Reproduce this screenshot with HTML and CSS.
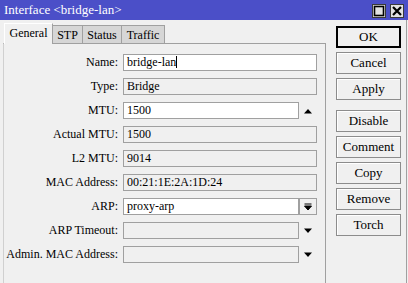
FILE: index.html
```html
<!DOCTYPE html>
<html lang="en">
<head>
  <meta charset="UTF-8">
  <title>Interface &lt;bridge-lan&gt;</title>
  <link rel="stylesheet" href="styles.css">
</head>
<body>
  <div class="window">
    <div class="titlebar">
      <span class="title">Interface &lt;bridge-lan&gt;</span>
      <div class="controls">
        <span class="ctl">
          <svg width="12" height="12" viewBox="0 0 12 12"><rect x="1.5" y="1.5" width="9" height="9" fill="none" stroke="#000" stroke-width="1.6"/></svg>
        </span>
        <span class="ctl">
          <svg width="12" height="12" viewBox="0 0 12 12"><path d="M2 2 L10 10 M10 2 L2 10" stroke="#000" stroke-width="2.2"/></svg>
        </span>
      </div>
    </div>

    <div class="main">
      <div class="left">
        <div class="tabs">
          <div class="tab active">General</div>
          <div class="tab stp">STP</div>
          <div class="tab status">Status</div>
          <div class="tab traffic">Traffic</div>
        </div>
        <div class="panel">
          <div class="row">
            <label>Name:</label>
            <div class="field edit">bridge-lan<span class="caret"></span></div>
          </div>
          <div class="row">
            <label>Type:</label>
            <div class="field">Bridge</div>
          </div>
          <div class="row">
            <label>MTU:</label>
            <div class="field edit short">1500</div>
            <span class="arrow">
              <svg width="10" height="6" viewBox="0 0 10 6"><path d="M1 5.5 L5 1 L9 5.5 Z" fill="#000"/></svg>
            </span>
          </div>
          <div class="row">
            <label>Actual MTU:</label>
            <div class="field">1500</div>
          </div>
          <div class="row">
            <label>L2 MTU:</label>
            <div class="field">9014</div>
          </div>
          <div class="row">
            <label>MAC Address:</label>
            <div class="field">00:21:1E:2A:1D:24</div>
          </div>
          <div class="row">
            <label>ARP:</label>
            <div class="field edit short">proxy-arp</div>
            <span class="dropbtn">
              <svg width="8" height="8" viewBox="0 0 8 8"><path d="M0.5 1 H7.5 M0.5 3 H7.5 L4 7 Z" stroke="#000" stroke-width="1" fill="#000"/></svg>
            </span>
          </div>
          <div class="row spaced">
            <label>ARP Timeout:</label>
            <div class="field short"></div>
            <span class="arrow">
              <svg width="10" height="6" viewBox="0 0 10 6"><path d="M1 0.5 L9 0.5 L5 5 Z" fill="#000"/></svg>
            </span>
          </div>
          <div class="row spaced">
            <label>Admin. MAC Address:</label>
            <div class="field short"></div>
            <span class="arrow">
              <svg width="10" height="6" viewBox="0 0 10 6"><path d="M1 0.5 L9 0.5 L5 5 Z" fill="#000"/></svg>
            </span>
          </div>
        </div>
      </div>

      <div class="buttons">
        <div class="btn default">OK</div>
        <div class="btn">Cancel</div>
        <div class="btn">Apply</div>
        <div class="btn gap">Disable</div>
        <div class="btn">Comment</div>
        <div class="btn">Copy</div>
        <div class="btn">Remove</div>
        <div class="btn">Torch</div>
      </div>
    </div>
  </div>
</body>
</html>
```

FILE: styles.css
```css
body {
  margin: 0;
  background: #f0f0f0;
  font-family: "Liberation Serif", "DejaVu Serif", serif;
  font-size: 12px;
  color: #000;
}
.window {
  width: 408px;
  height: 283px;
  display: flex;
  flex-direction: column;
  overflow: hidden;
}
.titlebar {
  height: 20px;
  background: #4b4fc8;
  color: #fff;
  display: flex;
  align-items: center;
  justify-content: space-between;
  padding: 0 4px 0 4px;
  font-size: 13px;
}
.controls {
  display: flex;
  gap: 4px;
  margin-top: 1px;
}
.ctl {
  width: 14px;
  height: 14px;
  box-sizing: border-box;
  background: #e2e2e2;
  border: 1px solid #3a3a3a;
  display: flex;
  align-items: center;
  justify-content: center;
}
.main {
  flex: 1;
  display: flex;
  border-right: 1px solid #a0a0a0;
  margin-right: 1px;
}
.left {
  width: 323px;
  margin-left: 3px;
  padding-top: 3px;
  display: flex;
  flex-direction: column;
}
.tabs {
  display: flex;
  align-items: flex-end;
  height: 20px;
  padding-left: 1px;
  position: relative;
  z-index: 1;
}
.tab {
  height: 18px;
  box-sizing: border-box;
  background: #d6d6d6;
  border: 1px solid #a0a0a0;
  border-bottom: none;
  border-left: none;
  text-align: center;
  line-height: 18px;
  font-size: 12px;
}
.tab.active {
  height: 21px;
  width: 49px;
  margin-bottom: -1px;
  background: #f0f0f0;
  border-left: 1px solid #fff;
  border-top: 1px solid #fff;
  line-height: 19px;
}
.tab.stp {
  width: 30px;
}
.tab.status {
  width: 39px;
}
.tab.traffic {
  width: 43px;
}
.panel {
  flex: 1;
  border: 1px solid #a0a0a0;
  border-left-color: #d0d0d0;
  border-bottom: none;
  padding-top: 10px;
}
.row {
  display: flex;
  align-items: center;
  height: 17px;
  margin-bottom: 7px;
}
.row.spaced {
  margin-top: 2px;
}
.row label {
  width: 114px;
  margin-right: 5px;
  text-align: right;
  white-space: nowrap;
}
.field {
  width: 194px;
  height: 17px;
  box-sizing: border-box;
  border: 1px solid #a0a0a0;
  padding-left: 3px;
  line-height: 15px;
  white-space: nowrap;
}
.field.short {
  width: 176px;
}
.field.edit {
  background: #fff;
}
.caret {
  display: inline-block;
  width: 1px;
  height: 12px;
  background: #000;
  vertical-align: -2px;
}
.arrow {
  width: 18px;
  display: flex;
  justify-content: center;
  align-items: center;
}
.dropbtn {
  width: 18px;
  height: 17px;
  box-sizing: border-box;
  border: 1px solid #a0a0a0;
  display: flex;
  justify-content: center;
  align-items: center;
}
.buttons {
  margin-left: 10px;
  padding-top: 6px;
  display: flex;
  flex-direction: column;
}
.btn {
  width: 65px;
  height: 22px;
  box-sizing: border-box;
  border: 1px solid #8c8c8c;
  box-shadow: inset 1px 1px 0 #fff;
  margin-bottom: 4px;
  text-align: center;
  line-height: 20px;
  font-size: 13px;
}
.btn.default {
  border: 2px solid #000;
  box-shadow: none;
  line-height: 18px;
}
.btn.gap {
  margin-top: 6px;
}
```
